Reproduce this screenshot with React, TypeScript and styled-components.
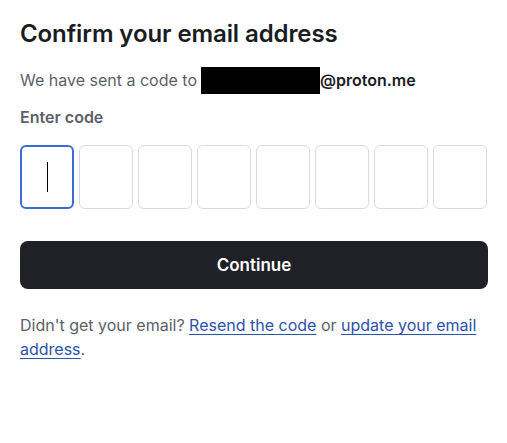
import React from "react";
import styled, { createGlobalStyle } from "styled-components";

const Global = createGlobalStyle`
  html, body { margin: 0; padding: 0; background: #fff; }
  body { font-family: Inter, "Noto Sans", sans-serif; color: #1b1c22; }
`;

const Page = styled.div`
  padding: 17px 20px 20px 20px;
  display: flex;
  flex-direction: column;
`;

const Title = styled.h1`
  margin: 0;
  font-size: 24px;
  line-height: 34px;
  font-weight: 600;
  color: #1b1c22;
  letter-spacing: -0.1px;
`;

const Sub = styled.p`
  margin: 16px 0 0;
  font-size: 16px;
  line-height: 27px;
  color: #5c5f6a;
  display: flex;
  align-items: center;
`;

const Redacted = styled.span`
  display: inline-block;
  width: 119px;
  height: 27px;
  background: #000;
  margin-left: 4px;
`;

const Domain = styled.strong`
  font-weight: 600;
  color: #1b1c22;
`;

const Label = styled.label`
  margin-top: 12px;
  font-size: 16px;
  line-height: 22px;
  font-weight: 600;
  color: #5c5f6a;
`;

const Boxes = styled.div`
  margin-top: 17px;
  display: grid;
  grid-template-columns: repeat(8, 54px);
  column-gap: 5px;
`;

const Box = styled.div<{ $active?: boolean }>`
  box-sizing: border-box;
  height: 64px;
  border-radius: 6px;
  border: ${(p) => (p.$active ? "2px solid #3b6bd4" : "1px solid #dadbe2")};
  display: flex;
  align-items: center;
  justify-content: center;
  background: #fff;
`;

const Caret = styled.span`
  width: 1px;
  height: 30px;
  background: #000;
`;

const Button = styled.button`
  margin-top: 32px;
  height: 48px;
  width: 468px;
  border: none;
  border-radius: 8px;
  background: #1f2127;
  color: #fff;
  font-family: Inter, "Noto Sans", sans-serif;
  font-size: 17px;
  font-weight: 600;
  cursor: pointer;
`;

const Footer = styled.p`
  margin: 24px 0 0;
  font-size: 16px;
  line-height: 24px;
  color: #5c5f6a;
`;

const Link = styled.a`
  color: #2d52ad;
  text-decoration: underline;
  text-underline-offset: 3px;
`;

export default function App() {
  return (
    <>
      <Global />
      <Page>
        <Title>Confirm your email address</Title>
        <Sub>
          We have sent a code to <Redacted />
          <Domain>@proton.me</Domain>
        </Sub>
        <Label>Enter code</Label>
        <Boxes>
          {Array.from({ length: 8 }).map((_, i) => (
            <Box key={i} $active={i === 0}>
              {i === 0 && <Caret />}
            </Box>
          ))}
        </Boxes>
        <Button>Continue</Button>
        <Footer>
          Didn't get your email? <Link href="#">Resend the code</Link> or{" "}
          <Link href="#">update your email address</Link>.
        </Footer>
      </Page>
    </>
  );
}
